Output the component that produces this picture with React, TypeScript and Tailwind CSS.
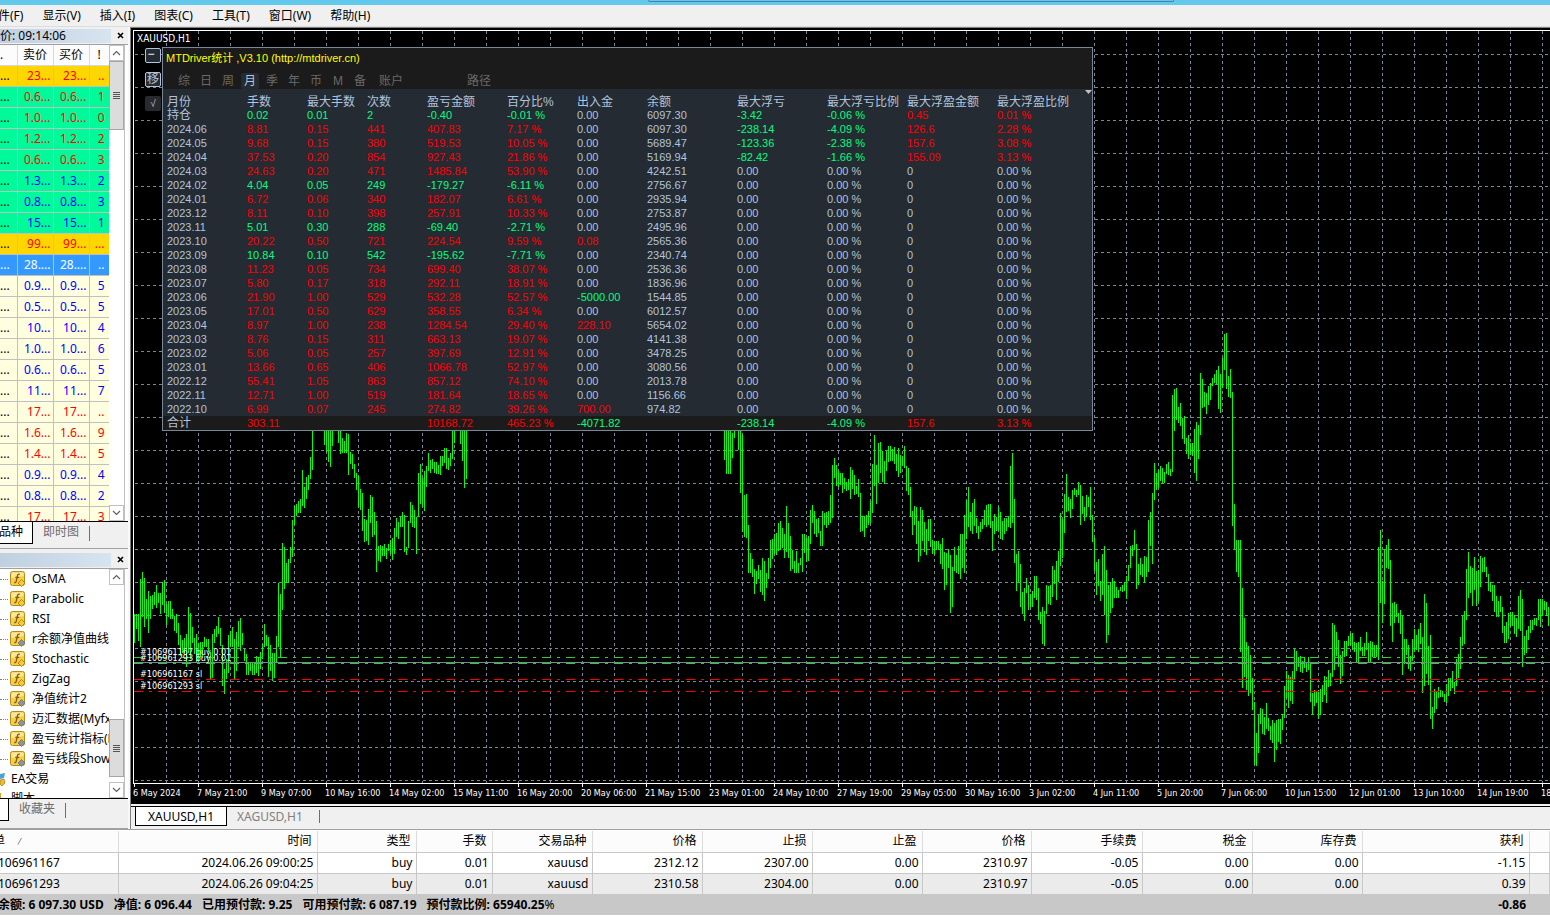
import React from 'react';

const UI = "font-['Noto_Sans','Noto_Sans_CJK_SC',sans-serif]";
const NARROW = "font-['DejaVu_Sans_Condensed','DejaVu_Sans',sans-serif]";
const ARIAL = "font-['Liberation_Sans','Noto_Sans_CJK_SC',sans-serif]";

const menus = ['文件(F)', '显示(V)', '插入(I)', '图表(C)', '工具(T)', '窗口(W)', '帮助(H)'];

const GOLD = 'bg-[#ffd700]';
const GREEN = 'bg-[#00fa9a]';
const CREAM = 'bg-[#ffffe0]';
const R = 'text-[#ff0000]';
const B = 'text-[#0000ff]';

const quotes: [string, string, string, string][] = [
  ['23...', '..', GOLD, R],
  ['0.6...', '1', GREEN, R],
  ['1.0...', '0', GREEN, R],
  ['1.2...', '2', GREEN, R],
  ['0.6...', '3', GREEN, R],
  ['1.3...', '2', GREEN, B],
  ['0.8...', '3', GREEN, B],
  ['15...', '1', GREEN, B],
  ['99...', '...', GOLD, R],
  ['28....', '..', 'bg-[#3399ff]', 'text-white'],
  ['0.9...', '5', CREAM, B],
  ['0.5...', '5', CREAM, B],
  ['10...', '4', CREAM, B],
  ['1.0...', '6', CREAM, B],
  ['0.6...', '5', CREAM, B],
  ['11...', '7', CREAM, B],
  ['17...', '..', CREAM, R],
  ['1.6...', '9', CREAM, R],
  ['1.4...', '5', CREAM, R],
  ['0.9...', '4', CREAM, B],
  ['0.8...', '2', CREAM, B],
  ['17...', '3', CREAM, R],
];

const indicators: [string, boolean][] = [
  ['OsMA', true],
  ['Parabolic', true],
  ['RSI', true],
  ['r余额净值曲线', false],
  ['Stochastic', true],
  ['ZigZag', true],
  ['净值统计2', false],
  ['迈汇数据(Myfx', false],
  ['盈亏统计指标(M', false],
  ['盈亏线段Show', false],
];

const statHead = ['月份', '手数', '最大手数', '次数', '盈亏金额', '百分比%', '出入金', '余额', '最大浮亏', '最大浮亏比例', '最大浮盈金额', '最大浮盈比例'];

const zero = ['0.00', '0.00 %', '0', '0.00 %'];
const stats: string[][] = [
  ['持仓', '0.02', '0.01', '2', '-0.40', '-0.01 %', '0.00', '6097.30', '-3.42', '-0.06 %', '0.45', '0.01 %'],
  ['2024.06', '8.81', '0.15', '441', '407.83', '7.17 %', '0.00', '6097.30', '-238.14', '-4.09 %', '126.6', '2.28 %'],
  ['2024.05', '9.68', '0.15', '380', '519.53', '10.05 %', '0.00', '5689.47', '-123.36', '-2.38 %', '157.6', '3.08 %'],
  ['2024.04', '37.53', '0.20', '854', '927.43', '21.86 %', '0.00', '5169.94', '-82.42', '-1.66 %', '155.09', '3.13 %'],
  ['2024.03', '24.63', '0.20', '471', '1485.84', '53.90 %', '0.00', '4242.51', ...zero],
  ['2024.02', '4.04', '0.05', '249', '-179.27', '-6.11 %', '0.00', '2756.67', ...zero],
  ['2024.01', '6.72', '0.06', '340', '182.07', '6.61 %', '0.00', '2935.94', ...zero],
  ['2023.12', '8.11', '0.10', '398', '257.91', '10.33 %', '0.00', '2753.87', ...zero],
  ['2023.11', '5.01', '0.30', '288', '-69.40', '-2.71 %', '0.00', '2495.96', ...zero],
  ['2023.10', '20.22', '0.50', '721', '224.54', '9.59 %', '0.08', '2565.36', ...zero],
  ['2023.09', '10.84', '0.10', '542', '-195.62', '-7.71 %', '0.00', '2340.74', ...zero],
  ['2023.08', '11.23', '0.05', '734', '699.40', '38.07 %', '0.00', '2536.36', ...zero],
  ['2023.07', '5.80', '0.17', '318', '292.11', '18.91 %', '0.00', '1836.96', ...zero],
  ['2023.06', '21.90', '1.00', '529', '532.28', '52.57 %', '-5000.00', '1544.85', ...zero],
  ['2023.05', '17.01', '0.50', '629', '358.55', '6.34 %', '0.00', '6012.57', ...zero],
  ['2023.04', '8.97', '1.00', '238', '1284.54', '29.40 %', '228.10', '5654.02', ...zero],
  ['2023.03', '8.76', '0.15', '311', '663.13', '19.07 %', '0.00', '4141.38', ...zero],
  ['2023.02', '5.06', '0.05', '257', '397.69', '12.91 %', '0.00', '3478.25', ...zero],
  ['2023.01', '13.66', '0.65', '406', '1066.78', '52.97 %', '0.00', '3080.56', ...zero],
  ['2022.12', '55.41', '1.05', '863', '857.12', '74.10 %', '0.00', '2013.78', ...zero],
  ['2022.11', '12.71', '1.00', '519', '181.64', '18.65 %', '0.00', '1156.66', ...zero],
  ['2022.10', '6.99', '0.07', '245', '274.82', '39.26 %', '700.00', '974.82', ...zero],
  ['合计', '303.11', '', '', '10168.72', '465.23 %', '-4071.82', '', '-238.14', '-4.09 %', '157.6', '3.13 %'],
];

const PLAIN = 'text-[#b0c4de]';
const GAIN = 'text-[#ff0000]';
const LOSS = 'text-[#00ff7f]';

function statColor(row: string[], i: number) {
  const v = parseFloat(row[i]);
  if (i === 0 || i === 7 || v === 0) return PLAIN;
  if (i <= 5) return row[4].startsWith('-') ? LOSS : GAIN;
  return v < 0 ? LOSS : GAIN;
}

/* High/low pairs of the bars, in thirds of a pixel below the section's base line. */
const sections: { x: number; base: number; bars: number[] }[] = [
  {
    x: 134,
    base: 400,
    bars: [
      642, 728, 642, 687, 642, 722, 537, 741, 516, 650, 534, 682, 597, 656, 573, 698, 588, 656, 585, 626, 576, 614, 555, 623,
      579, 608, 579, 641, 546, 614, 540, 638, 612, 674, 603, 650, 603, 656, 627, 656, 648, 692, 642, 698, 669, 734, 705, 769,
      720, 758, 714, 760, 702, 800, 621, 758, 639, 776, 681, 730, 714, 763, 702, 787, 730, 781, 726, 770, 726, 773, 711, 741,
      717, 740, 717, 755, 756, 836, 702, 834, 687, 730, 678, 710, 651, 702, 684, 738, 735, 857, 807, 882, 776, 836, 705, 818,
      693, 742, 681, 740, 717, 840, 696, 812, 663, 740, 654, 752, 699, 735, 747, 783, 762, 824, 786, 824, 786, 814, 790, 826,
      789, 824, 768, 818, 771, 828, 756, 806, 732, 776, 672, 740, 705, 738, 711, 830, 735, 812, 759, 842, 759, 834, 708, 785,
      549, 740, 582, 771, 429, 629, 441, 566, 489, 548, 477, 550, 441, 490, 360, 470, 318, 374, 312, 348, 303, 338, 297, 338,
      210, 318, 261, 323, 231, 297, 225, 270, 171, 236, 30, 210, 0, 80, 0, 80, 0, 80, 0, 80, 0, 80, 30, 135, 30, 156, 30, 186,
      30, 201, 30, 138, 0, 80, 0, 80, 60, 129, 93, 161, 114, 160, 123, 160, 99, 158, 102, 224, 156, 192, 162, 206, 192, 234,
      219, 269, 228, 321, 267, 330, 279, 392, 357, 426, 360, 422, 327, 434, 285, 369, 291, 410, 336, 405, 363, 516, 438, 482,
      435, 486, 438, 468, 432, 468, 444, 476, 432, 453, 420, 461, 414, 479, 384, 461, 354, 412, 366, 416, 348, 380, 336, 380,
      345, 456, 441, 464, 363, 444, 306, 368, 315, 380, 330, 384, 351, 461, 219, 350, 192, 312, 234, 320, 213, 332, 198, 261,
      159, 213, 180, 219, 177, 206, 186, 219, 186, 222, 195, 221, 168, 224, 168, 198, 144, 188, 144, 206, 174, 210, 159, 198,
      60, 177, 60, 129, 0, 80, 0, 80, 60, 132, 60, 183, 60, 264, 60, 237,
    ],
  },
  {
    x: 724,
    base: 400,
    bars: [
      60, 180, 60, 222, 60, 222, 60, 222, 99, 174, 93, 114, 0, 80, 60, 150, 60, 279, 105, 396, 285, 410, 282, 414, 375, 518,
      459, 518, 477, 531, 507, 582, 513, 552, 495, 537, 510, 576, 474, 585, 483, 603, 519, 564, 474, 537, 420, 504, 417, 476,
      402, 461, 399, 464, 369, 453, 363, 451, 384, 444, 402, 474, 318, 456, 369, 474, 408, 513, 450, 507, 483, 518, 453, 518,
      489, 518, 474, 495, 402, 516, 402, 458, 414, 486, 408, 483, 330, 432, 315, 369, 333, 402, 357, 410, 354, 399, 393, 438,
      333, 438, 339, 375, 336, 383, 333, 375, 285, 369, 195, 354, 174, 234, 195, 258, 213, 261, 219, 255, 219, 279, 234, 267,
      246, 273, 237, 270, 201, 297, 210, 267, 225, 285, 258, 282, 237, 290, 279, 396, 348, 392, 348, 411, 345, 384, 333, 375,
      303, 369, 192, 339, 105, 258, 195, 312, 129, 249, 126, 219, 153, 246, 183, 252, 153, 213, 138, 186, 138, 182, 147, 182,
      141, 192, 162, 213, 144, 231, 165, 219, 168, 198, 138, 204, 198, 273, 204, 285, 261, 350, 333, 405, 318, 374, 321, 432,
      363, 486, 321, 468, 330, 423, 366, 455, 387, 465, 357, 423, 357, 441, 420, 461, 423, 464, 423, 450, 423, 450, 432, 492,
      414, 507, 456, 570, 459, 555, 447, 504, 465, 638, 501, 621, 441, 513, 465, 518, 438, 521, 402, 536, 402, 504, 345, 518,
      300, 416, 261, 380, 336, 392, 309, 402, 297, 378, 354, 398, 378, 416, 366, 396, 357, 387, 330, 375, 315, 380, 312, 375,
      312, 384, 363, 453, 342, 402, 351, 392, 321, 392, 336, 416, 363, 419, 354, 402, 354, 393, 348, 382, 198, 384, 159, 369,
      297, 489, 462, 573, 453, 546, 492, 621, 576, 642, 564, 663, 534, 579, 555, 630, 582, 621, 573, 620, 528, 594, 528, 600,
      564, 660, 636, 672, 621, 732, 633, 738, 555, 642, 558, 612, 555, 615, 498, 591, 510, 552, 483, 600, 453, 546, 339, 498,
      357, 474, 282, 399, 222, 336, 291, 333, 297, 354, 270, 327, 264, 285, 270, 291, 246, 285, 255, 375, 288, 342, 321, 363,
      285, 350, 291, 321, 261, 360, 345, 426, 414, 513, 486, 585, 477, 558,
    ],
  },
  {
    x: 1100,
    base: 320,
    bars: [
      783, 843, 702, 825, 678, 885, 750, 969, 795, 945, 786, 879, 774, 864, 783, 834, 801, 834, 810, 834, 801, 813, 795, 816,
      786, 813, 768, 837, 735, 783, 678, 744, 675, 708, 630, 690, 672, 807, 732, 795, 714, 765, 732, 771, 708, 789, 711, 771,
      600, 756, 576, 678, 519, 732, 429, 540, 459, 510, 450, 504, 438, 483, 444, 492, 456, 489, 432, 462, 426, 465, 447, 468,
      225, 456, 207, 333, 204, 300, 261, 309, 249, 318, 294, 357, 288, 372, 354, 402, 345, 417, 369, 405, 369, 408, 327, 459,
      306, 483, 315, 417, 159, 345, 177, 264, 216, 261, 219, 282, 198, 255, 189, 240, 174, 198, 162, 189, 150, 192, 138, 267,
      162, 279, 114, 204, 42, 150, 39, 207, 168, 231, 147, 234, 216, 618, 552, 687, 660, 756, 660, 771, 660, 996, 804, 1104,
      894, 1071, 966, 1110, 978, 1128, 1005, 1119, 1074, 1170, 1146, 1335, 1239, 1338, 1185, 1299, 1164, 1212, 1167, 1242,
      1191, 1245, 1149, 1227, 1194, 1233, 1218, 1260, 1200, 1269, 1209, 1326, 1200, 1290, 1197, 1266, 1197, 1272, 1182, 1230,
      1098, 1194, 1053, 1134, 1065, 1164, 1071, 1143, 1053, 1152, 987, 1077, 993, 1053, 1011, 1041, 1008, 1056, 1023, 1059,
      1011, 1044, 1026, 1056, 1011, 1050, 1026, 1146, 1119, 1185, 1110, 1158, 1116, 1149, 1110, 1197, 1107, 1185, 1095, 1146,
      1068, 1125, 1071, 1149, 1050, 1101, 1059, 1098, 909, 1071, 915, 1050, 936, 1008, 960, 1041, 1005, 1092, 993, 1068,
      963, 1011, 963, 1008, 948, 978, 939, 975, 939, 990, 966, 996, 969, 1029, 966, 1032, 951, 993, 981, 1008, 969, 1008,
      936, 990, 969, 1026, 963, 1029, 966, 1011, 975, 1011, 975, 1011, 681, 1020, 630, 849, 783, 909, 687, 852, 675, 744,
      657, 747, 720, 918, 849, 966, 846, 909, 852, 891, 879, 909, 870, 942, 888, 1065, 957, 1032, 957, 1005, 975, 1047,
      1008, 1053, 957, 1023, 927, 996, 945, 990, 927, 996, 909, 972, 951, 1119, 822, 1098, 849, 1062, 978, 1095, 945, 1197,
      1161, 1227, 1107, 1179, 1113, 1167, 1101, 1134, 1110, 1131, 1113, 1131, 1122, 1146, 1092, 1149, 1074, 1128, 1074, 1113,
      1053, 1104, 1086, 1122, 1017, 1098, 1002, 1074, 951, 1047, 888, 978, 873, 972, 747, 900, 696, 834, 738, 819, 744, 858,
      711, 810, 753, 858, 750, 843, 708, 801, 714, 756, 711, 756, 741, 771, 762, 813, 786, 816, 795, 843, 795, 876, 828, 891,
      843, 891, 828, 876, 861, 939, 918, 969, 906, 969, 879, 957, 876, 918, 876, 918, 885, 942, 894, 951, 828, 927, 810, 933,
      837, 1041, 948, 1005, 930, 999, 918, 960, 900, 939, 900, 930, 894, 915, 894, 918, 837, 900, 837, 921, 837, 888, 843, 870,
      846, 888, 861, 918,
    ],
  },
];

const LEFT = 134;
const TOP = 31;

function barPath() {
  let d = '';
  for (const s of sections) {
    for (let i = 0; i < s.bars.length; i += 2) {
      const x = s.x - LEFT + i;
      const top = Math.round(s.base - TOP + s.bars[i] / 3);
      const bottom = Math.round(s.base - TOP + s.bars[i + 1] / 3);
      d += `M${x} ${top}h1V${bottom}h-1z`;
    }
  }
  return d;
}

const times = [
  '6 May 2024', '7 May 21:00', '9 May 07:00', '10 May 16:00', '14 May 02:00', '15 May 11:00', '16 May 20:00', '20 May 06:00',
  '21 May 15:00', '23 May 01:00', '24 May 10:00', '27 May 19:00', '29 May 05:00', '30 May 16:00', '3 Jun 02:00', '4 Jun 11:00',
  '5 Jun 20:00', '7 Jun 06:00', '10 Jun 15:00', '12 Jun 01:00', '13 Jun 10:00', '14 Jun 19:00', '18 Jun 05:00',
];

function PriceChart() {
  const cols = Array.from({ length: 44 }, (_, i) => 32 + i * 32);
  const rows = Array.from({ length: 23 }, (_, i) => 23 + i * 33);
  return (
    <svg className="absolute inset-0 h-full w-full" shapeRendering="crispEdges" aria-hidden="true">
      <g stroke="#778899" strokeDasharray="3 3">
        {cols.map((x) => (
          <line key={x} x1={x + 0.5} x2={x + 0.5} y1="0" y2="100%" />
        ))}
        {rows.map((y) => (
          <line key={y} x1="1" x2="100%" y1={y + 0.5} y2={y + 0.5} />
        ))}
      </g>
      <path d={barPath()} fill="#00ff00" />
      <line x1="0" x2="100%" y1="631.5" y2="631.5" stroke="#778899" />
      <g stroke="#32cd32" strokeDasharray="9 6 3 6">
        <line x1="0" x2="100%" y1="626.5" y2="626.5" />
        <line x1="0" x2="100%" y1="632.5" y2="632.5" />
      </g>
      <g stroke="#ff0000" strokeDasharray="9 6 3 6">
        <line x1="0" x2="100%" y1="648.5" y2="648.5" />
        <line x1="0" x2="100%" y1="660.5" y2="660.5" />
      </g>
      <g fill="#ffffff" className={`text-[9px] ${NARROW}`}>
        <text x="6" y="624">#106961167 buy 0.01</text>
        <text x="6" y="630">#106961293 buy 0.01</text>
        <text x="6" y="646">#106961167 sl</text>
        <text x="6" y="658">#106961293 sl</text>
      </g>
    </svg>
  );
}

function StatsPanel() {
  const tabs = ['综', '日', '周', '月', '季', '年', '币', 'M', '备'];
  return (
    <section className={`absolute left-[28px] top-[16px] w-[931px] border border-[#778899] bg-[#242b33] ${ARIAL}`}>
      <header className="h-[41px] bg-[#1b1b1b]">
        <h1 className="h-[21px] pl-[3px] text-[11px] leading-[21px] text-[#ffff00]">MTDriver统计 ,V3.10 (http://mtdriver.cn)</h1>
        <nav className="flex pl-[10px] pt-[4px] text-[12px] leading-[16px] text-[#696969]">
          {tabs.map((t) => (
            <button key={t} className="w-[22px]">
              <span className={t === '月' ? 'mx-auto block w-[18px] rounded-[2px] bg-[#242b33] text-[#b0c4de]' : 'block'}>{t}</span>
            </button>
          ))}
          <button className="w-[40px]">账户</button>
          <button className="ml-[48px] w-[40px]">路径</button>
        </nav>
      </header>
      <svg className="absolute right-0 top-[42px] h-[5px] w-[7px]" viewBox="0 0 7 5" aria-hidden="true">
        <path d="M0 0h7L3.500 4z" fill="#c0c0c0" />
      </svg>
      <table className="w-full table-fixed border-collapse text-left text-[11px] leading-[14px]">
        <colgroup>
          <col className="w-[84px]" />
          <col className="w-[60px]" />
          <col className="w-[60px]" />
          <col className="w-[60px]" />
          <col className="w-[80px]" />
          <col className="w-[70px]" />
          <col className="w-[70px]" />
          <col className="w-[90px]" />
          <col className="w-[90px]" />
          <col className="w-[80px]" />
          <col className="w-[90px]" />
          <col />
        </colgroup>
        <thead>
          <tr className="h-[19px] text-[12px] leading-[12px] text-[#b0c4de]">
            {statHead.map((h, i) => (
              <th key={h} className={`whitespace-nowrap p-0 pt-[7px] font-normal ${i === 0 ? 'pl-[4px]' : ''}`}>
                {h}
              </th>
            ))}
          </tr>
        </thead>
        <tbody>
          {stats.map((row, r) => (
            <tr key={row[0]} className={r === stats.length - 1 ? 'h-[14px] bg-[#1b1b1b]' : 'h-[14px]'}>
              {row.map((v, i) => (
                <td
                  key={i}
                  className={`whitespace-nowrap p-0 ${i === 0 ? 'pl-[4px]' : ''} ${i === 0 && v.length === 2 ? 'text-[12px]' : ''} ${statColor(row, i)}`}
                >
                  {v}
                </td>
              ))}
            </tr>
          ))}
        </tbody>
      </table>
    </section>
  );
}

function ScrollButton({ up }: { up?: boolean }) {
  return (
    <button
      aria-label={up ? '向上滚动' : '向下滚动'}
      className="flex h-[16px] w-full shrink-0 items-center justify-center border border-[#c0c0c0] bg-white"
    >
      <svg width="9" height="6" viewBox="0 0 9 6" fill="none" stroke="#606060" strokeWidth="1.200">
        <path d={up ? 'M1 5L4.500 1.500L8 5' : 'M1 1L4.500 4.500L8 1'} />
      </svg>
    </button>
  );
}

function Thumb({ size }: { size: string }) {
  return (
    <div className={`flex w-full shrink-0 flex-col items-center justify-center gap-px border border-[#a6a6a6] bg-[#dcdcdc] ${size}`}>
      <i className="h-px w-[7px] bg-[#555]" />
      <i className="h-px w-[7px] bg-[#555]" />
      <i className="h-px w-[7px] bg-[#555]" />
      <i className="h-px w-[7px] bg-[#555]" />
    </div>
  );
}

function PanelTitle({ text }: { text: string }) {
  return (
    <div className="flex h-[15px] shrink-0 items-center pr-px">
      <div className="mr-[2px] h-[14px] flex-1 overflow-hidden whitespace-nowrap bg-gradient-to-r from-[#c0d0e0] to-[#d8e4f0] text-[12px] leading-[14px]">
        {text}
      </div>
      <button aria-label="关闭" className="flex h-[14px] w-[14px] items-center justify-center">
        <svg width="7" height="7" viewBox="0 0 7 7" stroke="#000" strokeWidth="1.600">
          <path d="M1 1L6 6M6 1L1 6" />
        </svg>
      </button>
    </div>
  );
}

function MarketWatch() {
  return (
    <section className="flex min-h-0 flex-1 flex-col border-b border-[#a0a0a0]">
      <PanelTitle text="价: 09:14:06" />
      <div className="mt-px flex min-h-0 flex-1 overflow-hidden border-b border-black border-t border-t-[#a0a0a0] bg-white">
        <div className="w-[109px] overflow-hidden">
          <table className="w-[109px] table-fixed border-collapse text-right text-[12px] leading-[18px]">
            <colgroup>
              <col className="w-[17px]" />
              <col className="w-[36px]" />
              <col className="w-[36px]" />
              <col className="w-[20px]" />
            </colgroup>
            <thead>
              <tr className="h-[20px] bg-[#fcfcfc] text-center">
                {['.', '卖价', '买价', '!'].map((h, i) => (
                  <th
                    key={h}
                    className={`border-b border-r border-[#d8d8d8] p-0 font-normal ${i === 0 ? 'text-left' : ''}`}
                  >
                    {h}
                  </th>
                ))}
              </tr>
            </thead>
            <tbody>
              {quotes.map(([price, spread, bg, fg], i) => (
                <tr key={i} className={`h-[21px] ${bg} ${fg}`}>
                  <td className={`border-b border-r border-[#c0c0c0] p-0 pr-[7px] ${fg === 'text-white' ? '' : 'text-black'}`}>...</td>
                  <td className="border-b border-r border-[#c0c0c0] p-0 pr-[2px]">{price}</td>
                  <td className="border-b border-r border-[#c0c0c0] p-0 pr-[2px]">{price}</td>
                  <td className="border-b border-r border-[#c0c0c0] p-0 pr-[4px]">{spread}</td>
                </tr>
              ))}
            </tbody>
          </table>
        </div>
        <div className="flex w-[16px] flex-col border-r border-[#c0c0c0]">
          <ScrollButton up />
          <Thumb size="h-[69px]" />
          <div className="flex-1" />
          <ScrollButton />
        </div>
      </div>
      <div className="flex h-[26px] shrink-0 items-start text-[12px] leading-[20px]">
        <button className="flex h-[22px] w-[33px] justify-end whitespace-nowrap border-b border-r border-black bg-white pr-[9px]">品种</button>
        <button className="ml-[10px] text-[#6d6d6d]">即时图</button>
        <span className="ml-[10px] mt-[4px] h-[15px] w-px bg-[#6d6d6d]" />
      </div>
    </section>
  );
}

function IndicatorIcon({ gold }: { gold: boolean }) {
  return (
    <svg className="shrink-0" width="16" height="16" viewBox="0 0 16 16" aria-hidden="true">
      <rect x="0.500" y="0.500" width="14" height="14" rx="2" fill="#f2cf4e" stroke="#b98a14" />
      <path d="M1.500 7V2.500a1 1 0 0 1 1-1h10a1 1 0 0 1 1 1V5z" fill="#fbe89a" />
      <path d="M9.800 3.300c-1.600-.6-2.200.4-2.500 1.900L6.300 10c-.3 1.400-1 1.900-2.100 1.500M5.300 6.300h4" fill="none" stroke="#8a5a00" strokeWidth="1.300" />
      <path d="M11.500 8.500l3.500 3.500-3.500 3.500L8 12z" fill={gold ? '#f4c93a' : '#8f9499'} stroke={gold ? '#a87808' : '#6b7076'} strokeWidth="0.800" />
    </svg>
  );
}

function Navigator() {
  return (
    <section className="flex h-[280px] shrink-0 flex-col pt-[3px]">
      <PanelTitle text="" />
      <div className="mt-px flex min-h-0 flex-1 border-b border-black border-t border-t-[#a0a0a0] bg-white">
        <ul className="w-[109px] overflow-hidden text-[12px] leading-[20px]">
          {indicators.map(([name, gold]) => (
            <li key={name} className="flex h-[20px] items-center whitespace-nowrap">
              <span className="mr-[2px] w-[8px] shrink-0 border-t border-dotted border-[#808080]" />
              <IndicatorIcon gold={gold} />
              <span className="ml-[6px]">{name}</span>
            </li>
          ))}
          <li className="flex h-[20px] items-center whitespace-nowrap">
            <svg className="mr-[5px] shrink-0" width="6" height="16" viewBox="0 0 6 16" aria-hidden="true">
              <path d="M0 3l5-1-1 5-4 1z" fill="#4aa3d8" />
              <path d="M0 9l4-1 1 4-3 3-2-2z" fill="#eebb33" stroke="#a87808" strokeWidth="0.700" />
            </svg>
            EA交易
          </li>
          <li className="flex h-[20px] items-center whitespace-nowrap">
            <svg className="mr-[5px] shrink-0" width="6" height="16" viewBox="0 0 6 16" aria-hidden="true">
              <path d="M0 2h1v12H0z" fill="#e0a030" />
            </svg>
            脚本
          </li>
        </ul>
        <div className="flex w-[16px] flex-col border-r border-[#c0c0c0]">
          <ScrollButton up />
          <div className="flex-1" />
          <Thumb size="h-[58px]" />
          <div className="h-[5px]" />
          <ScrollButton />
        </div>
      </div>
      <div className="flex h-[30px] shrink-0 items-start border-b border-[#a0a0a0] text-[12px] leading-[20px]">
        <span className="h-[22px] w-[9px] border-b border-r border-black bg-white" />
        <button className="ml-[10px] text-[#6d6d6d]">收藏夹</button>
        <span className="ml-[10px] mt-[4px] h-[15px] w-px bg-[#6d6d6d]" />
      </div>
    </section>
  );
}

const orderCols = ['w-[118px]', 'w-[199px]', 'w-[99px]', 'w-[76px]', 'w-[100px]', 'w-[110px]', 'w-[110px]', 'w-[110px]', 'w-[109px]', 'w-[111px]', 'w-[110px]', 'w-[110px]', 'w-[167px]', ''];
const orderHead = ['单', '时间', '类型', '手数', '交易品种', '价格', '止损', '止盈', '价格', '手续费', '税金', '库存费', '获利', ''];
const orders = [
  ['106961167', '2024.06.26 09:00:25', 'buy', '0.01', 'xauusd', '2312.12', '2307.00', '0.00', '2310.97', '-0.05', '0.00', '0.00', '-1.15', ''],
  ['106961293', '2024.06.26 09:04:25', 'buy', '0.01', 'xauusd', '2310.58', '2304.00', '0.00', '2310.97', '-0.05', '0.00', '0.00', '0.39', ''],
];

function Terminal() {
  return (
    <section className="shrink-0 border-t border-[#a0a0a0] bg-white pb-[7px] pt-px">
      <table className="w-full table-fixed border-collapse text-right text-[12px] leading-[20px]">
        <colgroup>
          {orderCols.map((c, i) => (
            <col key={i} className={c} />
          ))}
        </colgroup>
        <thead>
          <tr className="h-[21px] bg-[#fcfcfc]">
            {orderHead.map((h, i) => (
              <th key={i} className="overflow-hidden whitespace-nowrap border-b border-b-[#c8c8c8] border-r border-r-[#dcdcdc] p-0 pr-[5px] font-normal">
                {i === 0 ? (
                  <span className="-ml-[7px] flex gap-[12px]">
                    {h}
                    <svg className="mt-[6px]" width="6" height="8" viewBox="0 0 6 8" stroke="#888" aria-hidden="true">
                      <path d="M1 7.500L4.500 1" />
                    </svg>
                  </span>
                ) : (
                  h
                )}
              </th>
            ))}
          </tr>
        </thead>
        <tbody>
          {orders.map((row, r) => (
            <tr key={r} className={`h-[21px] ${r ? 'bg-[#ebebeb]' : 'bg-white'}`}>
              {row.map((v, i) => (
                <td key={i} className={`overflow-hidden border-r border-[#c8c8c8] p-0 pr-[3px] ${r ? '' : 'border-b'}`}>
                  {i === 0 ? <span className="-ml-[2px] block text-left">{v}</span> : v}
                </td>
              ))}
            </tr>
          ))}
        </tbody>
        <tfoot>
          <tr className="h-[21px] bg-[#c8c8c8] font-bold">
            <td colSpan={12} className="overflow-hidden p-0">
              <span className="-ml-[2px] flex gap-[10px] whitespace-nowrap">
                <span>余额: 6 097.30 USD</span>
                <span>净值: 6 096.44</span>
                <span>已用预付款: 9.25</span>
                <span>可用预付款: 6 087.19</span>
                <span>
                  预付款比例: 65940.25<span className="font-normal">%</span>
                </span>
              </span>
            </td>
            <td className="p-0 pr-[3px]">-0.86</td>
            <td />
          </tr>
        </tfoot>
      </table>
    </section>
  );
}

export default function App() {
  return (
    <div className={`flex h-screen flex-col overflow-hidden bg-[#f0f0f0] text-black ${UI}`}>
      <div className="flex h-[5px] shrink-0 justify-center bg-[#63c9ec]">
        <div className="ml-[272px] h-[2px] w-[526px] rounded-b-[2px] border border-t-0 border-[#4a7fb0]" />
      </div>
      <nav className="-ml-[14px] flex h-[22px] shrink-0 gap-[19px] border-b border-[#dcdcdc] text-[12px] leading-[21px]">
        {menus.map((m) => (
          <button key={m} className="whitespace-nowrap">
            {m}
          </button>
        ))}
      </nav>
      <main className="flex min-h-0 flex-1">
        <aside className="flex w-[130px] shrink-0 flex-col border-r-2 border-[#f8f8f8] pt-px">
          <MarketWatch />
          <Navigator />
        </aside>
        <div className="flex min-w-0 flex-1 flex-col border-l border-t border-[#808080]">
          <div className="flex min-h-0 flex-1 flex-col bg-black pl-[2px] pt-[2px]">
            <div className="relative min-h-0 flex-1 overflow-hidden border-b border-l border-t border-white">
              <PriceChart />
              <h2 className={`absolute left-[3px] top-px text-[10px] leading-[13px] text-white ${NARROW}`}>XAUUSD,H1</h2>
              <div className={`absolute left-[11px] top-[17px] flex flex-col gap-[9px] text-[12px] leading-[13px] text-[#b0c4de] ${ARIAL}`}>
                <button className="flex h-[15px] w-[16px] justify-center rounded-[2px] border border-[#b0c4de] bg-[#242b33] pr-[4px] leading-[10px] text-white">−</button>
                <button className="h-[15px] w-[16px] rounded-[2px] border border-[#b0c4de] bg-[#2a2e33]">移</button>
                <button className="h-[15px] w-[16px] rounded-[2px] bg-[#2a2a2e] text-[10px]">√</button>
              </div>
              <StatsPanel />
            </div>
            <div className={`flex h-[20px] shrink-0 overflow-hidden text-[9px] leading-[18px] text-white ${NARROW}`}>
              {times.map((t) => (
                <div key={t} className="relative w-[64px] shrink-0 whitespace-nowrap">
                  <i className="absolute left-px top-0 h-[3px] w-px bg-white" />
                  {t}
                </div>
              ))}
            </div>
          </div>
          <div className="flex h-[25px] shrink-0 flex-col pt-[2px]">
            <div className="flex h-[20px] border-t border-black pl-[4px] text-[12px] leading-[19px]">
              <button className="w-[92px] border-b border-l border-r border-black bg-white">XAUUSD,H1</button>
              <button className="ml-[10px] text-[#808080]">XAGUSD,H1</button>
              <span className="ml-[16px] mt-[3px] h-[13px] w-px bg-[#6d6d6d]" />
            </div>
          </div>
        </div>
      </main>
      <Terminal />
    </div>
  );
}
